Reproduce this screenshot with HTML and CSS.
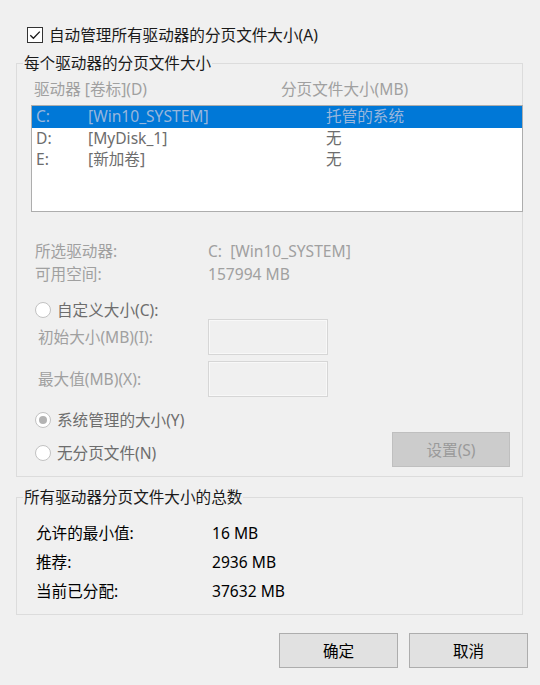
FILE: index.html
```html
<!DOCTYPE html>
<html lang="zh-CN">
<head>
<meta charset="utf-8">
<title>虚拟内存</title>
<link rel="stylesheet" href="styles.css">
</head>
<body>
<div class="auto">
  <span class="check"><svg width="14" height="14" viewBox="0 0 14 14"><polyline points="2.3,7.2 5.4,10.3 11.8,3.6" fill="none" stroke="#1a1a1a" stroke-width="1.3"/></svg></span>
  <span>自动管理所有驱动器的分页文件大小(A)</span>
</div>

<fieldset class="group g1">
  <legend>每个驱动器的分页文件大小</legend>
  <div class="head"><span>驱动器 [卷标](D)</span><span>分页文件大小(MB)</span></div>
  <div class="list">
    <div class="row sel"><span>C:</span><span>[Win10_SYSTEM]</span><span>托管的系统</span></div>
    <div class="row"><span>D:</span><span>[MyDisk_1]</span><span>无</span></div>
    <div class="row"><span>E:</span><span>[新加卷]</span><span>无</span></div>
  </div>
  <div class="info">
    <span>所选驱动器:</span><span>C:&nbsp; [Win10_SYSTEM]</span>
    <span>可用空间:</span><span>157994 MB</span>
  </div>
  <div class="radio-row r1"><span class="radio"></span><span>自定义大小(C):</span></div>
  <div class="field f1"><span>初始大小(MB)(I):</span><span class="input"></span></div>
  <div class="field f2"><span>最大值(MB)(X):</span><span class="input"></span></div>
  <div class="radio-row r2"><span class="radio on"></span><span>系统管理的大小(Y)</span></div>
  <div class="last">
    <div class="radio-row r3"><span class="radio"></span><span>无分页文件(N)</span></div>
    <div class="setbtn">设置(S)</div>
  </div>
</fieldset>

<fieldset class="group g2">
  <legend>所有驱动器分页文件大小的总数</legend>
  <div class="totals">
    <span>允许的最小值:</span><span>16 MB</span>
    <span>推荐:</span><span>2936 MB</span>
    <span>当前已分配:</span><span>37632 MB</span>
  </div>
</fieldset>

<div class="buttons">
  <div class="btn">确定</div>
  <div class="btn">取消</div>
</div>
</body>
</html>
```

FILE: styles.css
```css
html, body {
  margin: 0;
  padding: 0;
}
body {
  background: #f0f0f0;
  font-family: "Noto Sans", "Noto Sans CJK SC", sans-serif;
  font-size: 15.6px;
  color: #1a1a1a;
  width: 540px;
  height: 685px;
  overflow: hidden;
}

.auto {
  display: flex;
  align-items: center;
  gap: 6px;
  margin: 27px 0 0 27px;
  height: 16px;
  line-height: 16px;
  white-space: nowrap;
}
.check {
  width: 14px;
  height: 14px;
  border: 1px solid #333333;
  background: #ffffff;
  display: flex;
  flex: none;
}

.group {
  margin: 12px 17px 0 16px;
  padding: 0;
  border: 1px solid #dcdcdc;
  min-width: 0;
}
.group legend {
  margin-left: 6px;
  padding: 0 1px;
  height: 16px;
  line-height: 16px;
  color: #1a1a1a;
  white-space: nowrap;
}
.g1 {
  padding-bottom: 9px;
}
.g2 {
  padding-bottom: 8px;
}

.head {
  margin-top: 10px;
  display: grid;
  grid-template-columns: 247px 1fr;
  padding-left: 17px;
  line-height: 16px;
  color: #a0a0a0;
  white-space: nowrap;
}

.list {
  margin: 8px -1px 0 14px;
  height: 105px;
  border: 1px solid #adadad;
  background: #ffffff;
}
.row {
  display: grid;
  grid-template-columns: 52px 238px 1fr;
  padding-left: 4px;
  height: 21.5px;
  line-height: 21.5px;
  color: #6d6d6d;
  white-space: nowrap;
}
.row.sel {
  background: #0078d7;
  color: #98b6dc;
}

.info {
  margin-top: 28px;
  display: grid;
  grid-template-columns: 173px 1fr;
  padding-left: 18px;
  line-height: 23px;
  color: #a0a0a0;
  white-space: nowrap;
}

.radio-row {
  display: flex;
  align-items: center;
  gap: 6px;
  padding-left: 18px;
  height: 18px;
  line-height: 18px;
  color: #6d6d6d;
  white-space: nowrap;
}
.radio {
  position: relative;
  width: 14px;
  height: 14px;
  border: 1px solid #c2c2c2;
  border-radius: 50%;
  background: #ffffff;
  flex: none;
}
.radio.on::after {
  content: "";
  position: absolute;
  left: 3px;
  top: 3px;
  width: 8px;
  height: 8px;
  border-radius: 50%;
  background: #b3b3b3;
}
.r1 {
  margin-top: 15px;
}
.r2 {
  margin-top: 14px;
}
.r3 {
  margin-top: 12px;
}

.field {
  display: grid;
  grid-template-columns: 170px 120px;
  align-items: center;
  padding-left: 21px;
  line-height: 16px;
  color: #a0a0a0;
  white-space: nowrap;
}
.field .input {
  height: 34px;
  border: 1px solid #d6d6d6;
  box-shadow: inset 0 0 0 1px #f8f8f8;
}
.f2 {
  margin-top: 6px;
}

.last {
  display: flex;
  justify-content: space-between;
  align-items: flex-start;
  margin-top: 3px;
  padding-right: 12px;
}
.setbtn {
  width: 116px;
  height: 33px;
  border: 1px solid #bfbfbf;
  background: #cccccc;
  color: #9a9a9a;
  display: flex;
  align-items: center;
  justify-content: center;
}

.totals {
  margin-top: 14px;
  display: grid;
  grid-template-columns: 176px 1fr;
  padding-left: 19px;
  line-height: 29px;
  color: #000000;
  white-space: nowrap;
}

.buttons {
  display: flex;
  justify-content: flex-end;
  gap: 11px;
  margin-top: 18px;
  padding-right: 12px;
}
.btn {
  width: 117px;
  height: 33px;
  border: 1px solid #adadad;
  background: #e1e1e1;
  color: #000000;
  display: flex;
  align-items: center;
  justify-content: center;
}
```
